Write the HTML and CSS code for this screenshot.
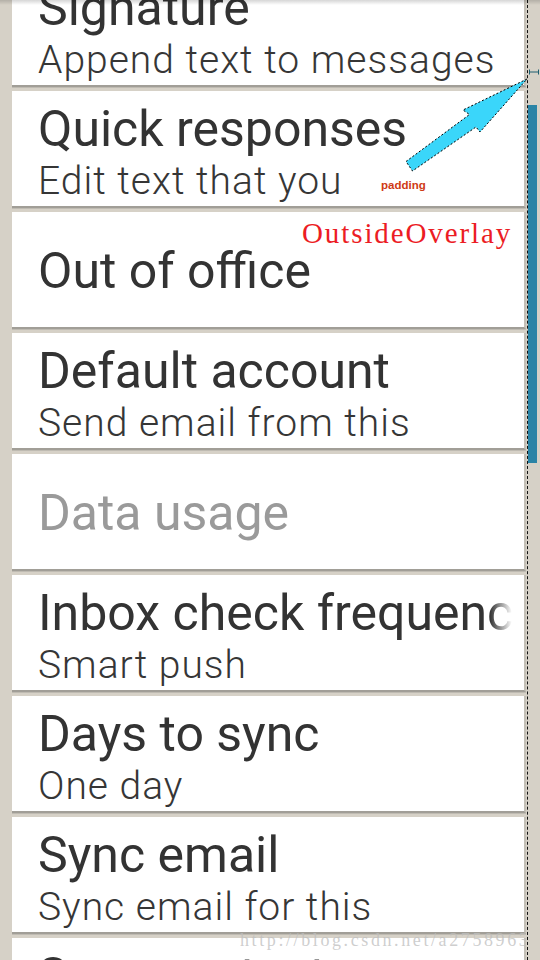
FILE: index.html
```html
<!DOCTYPE html>
<html>
<head>
<meta charset="utf-8">
<link rel="stylesheet" href="styles.css">
</head>
<body>
<div class="screen">
  <div class="list">
    <div class="card two">
      <div class="title">Signature</div>
      <div class="summary">Append text to messages</div>
    </div>
    <div class="card two">
      <div class="title">Quick responses</div>
      <div class="summary">Edit text that you</div>
    </div>
    <div class="card one">
      <div class="title">Out of office</div>
    </div>
    <div class="card two">
      <div class="title">Default account</div>
      <div class="summary">Send email from this</div>
    </div>
    <div class="card one">
      <div class="title disabled">Data usage</div>
    </div>
    <div class="card two">
      <div class="title fade">Inbox check frequency</div>
      <div class="summary">Smart push</div>
    </div>
    <div class="card two">
      <div class="title">Days to sync</div>
      <div class="summary">One day</div>
    </div>
    <div class="card two">
      <div class="title">Sync email</div>
      <div class="summary">Sync email for this</div>
    </div>
    <div class="card two">
      <div class="title">Sync contacts</div>
      <div class="summary">Sync contacts for this</div>
    </div>
  </div>
  <div class="rail">
    <div class="thumb"></div>
  </div>

  <div class="top-shadow"></div>
  <div class="guide"></div>
  <svg class="dim" width="12" height="6" viewBox="0 0 12 6">
    <line x1="1" y1="3" x2="11" y2="3" stroke="#1f5f70" stroke-width="1"/>
    <line x1="1.5" y1="0.5" x2="1.5" y2="5.5" stroke="#1f5f70" stroke-width="1"/>
    <line x1="10.5" y1="0.5" x2="10.5" y2="5.5" stroke="#1f5f70" stroke-width="1"/>
  </svg>
  <svg class="arrow" width="540" height="200" viewBox="0 0 540 200">
    <polygon points="527,79 463,110 469.5,114.5 406,161.5 412.5,171 476,127 480,132" fill="#3ad6fa" stroke="#000" stroke-width="1" stroke-dasharray="2 2"/>
  </svg>
  <div class="note-padding">padding</div>
  <div class="note-overlay">OutsideOverlay</div>
  <div class="watermark">http://blog.csdn.net/a2758963</div>
</div>
</body>
</html>
```
FILE: styles.css
```css
html, body {
  margin: 0;
  padding: 0;
}
body {
  width: 540px;
  height: 960px;
  overflow: hidden;
  background: #d6d1c7;
}
.screen {
  position: relative;
  width: 540px;
  height: 960px;
  overflow: hidden;
  display: flex;
  flex-direction: row;
}
.list {
  margin-left: 12px;
  width: 514px;
  margin-top: -30px;
  display: flex;
  flex-direction: column;
}
.card {
  box-sizing: border-box;
  height: 117px;
  flex: none;
  background: #fff;
  border-right: 2px solid #c3bfb6;
  border-bottom: 2px solid #a19e97;
  box-shadow: 0 1px 0 #bfbbb2;
  margin-bottom: 4px;
  padding-left: 26px;
  padding-right: 12px;
  display: flex;
  flex-direction: column;
  font-family: Roboto, "Noto Sans", sans-serif;
  color: #333;
}
.card.two {
  padding-top: 10px;
}
.card.one {
  padding-top: 31px;
}
.title {
  font-size: 50px;
  line-height: 56px;
  font-weight: 400;
  white-space: nowrap;
  overflow: hidden;
}
.title.disabled {
  color: #9a9a9a;
}
.title.fade {
  -webkit-mask-image: linear-gradient(to right, #000 calc(100% - 22px), transparent 100%);
  mask-image: linear-gradient(to right, #000 calc(100% - 22px), transparent 100%);
}
.summary {
  font-size: 39px;
  line-height: 48px;
  font-weight: 300;
  letter-spacing: 1px;
  white-space: nowrap;
  overflow: hidden;
  color: #363636;
}
.rail {
  width: 14px;
  flex: none;
  padding-left: 2px;
  box-sizing: border-box;
}
.thumb {
  margin-top: 105px;
  width: 9px;
  height: 358px;
  background: #2a84a6;
}
.top-shadow {
  position: absolute;
  left: 0;
  top: 0;
  width: 540px;
  height: 5px;
  background: linear-gradient(to bottom, rgba(0,0,0,0.16), rgba(0,0,0,0));
}
.guide {
  position: absolute;
  left: 527px;
  top: 0;
  height: 960px;
  border-left: 1px dashed #111;
}
.dim {
  position: absolute;
  left: 528px;
  top: 69px;
}
.arrow {
  position: absolute;
  left: 0;
  top: 0;
}
.note-padding {
  position: absolute;
  left: 381px;
  top: 178px;
  font-family: "Liberation Sans", Arial, sans-serif;
  font-weight: bold;
  font-size: 11.5px;
  line-height: 14px;
  color: #cf3a14;
}
.note-overlay {
  position: absolute;
  left: 302px;
  top: 218px;
  font-family: "Liberation Serif", serif;
  font-size: 29px;
  line-height: 30px;
  letter-spacing: 1.9px;
  color: #ec1c24;
  white-space: nowrap;
}
.watermark {
  position: absolute;
  left: 240px;
  top: 930px;
  width: 285px;
  overflow: hidden;
  font-family: "Liberation Serif", serif;
  font-size: 18px;
  line-height: 20px;
  letter-spacing: 2.6px;
  color: rgba(190,190,190,0.75);
  white-space: nowrap;
}
```
